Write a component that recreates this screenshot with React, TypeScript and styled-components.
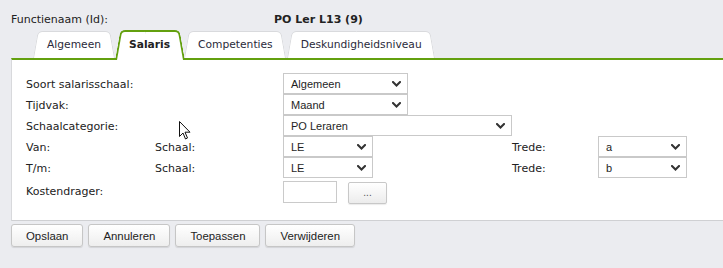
import styled, { createGlobalStyle } from "styled-components";

const GlobalStyle = createGlobalStyle`
  html, body {
    margin: 0;
    background: #ebecf0;
  }
  body {
    font-family: "DejaVu Sans", Verdana, sans-serif;
    font-size: 11px;
    color: #222;
    overflow: hidden;
  }
`;

const GREEN = "#63a00f";

interface TabProps {
  $active?: boolean;
}

interface BoxProps {
  $width: number;
}

const tabs = ["Algemeen", "Salaris", "Competenties", "Deskundigheidsniveau"];

const Chevron = () => (
  <svg width="9" height="6" viewBox="0 0 9 6">
    <polyline
      points="1,1 4.5,4.5 8,1"
      fill="none"
      stroke="#333"
      strokeWidth="2"
      strokeLinecap="square"
    />
  </svg>
);

const Select = ({ value, width }: { value: string; width: number }) => (
  <SelectBox $width={width}>
    <span>{value}</span>
    <Chevron />
  </SelectBox>
);

const Cursor = () => (
  <CursorWrap>
    <svg width="12" height="19" viewBox="0 0 12 19">
      <path
        d="M0.5 0.5 L0.5 15.5 L4 12 L6.5 18 L8.5 17 L6 11.2 L11 11.2 Z"
        fill="#fff"
        stroke="#111"
        strokeWidth="1"
        strokeLinejoin="miter"
      />
    </svg>
  </CursorWrap>
);

const App = () => {
  return (
    <Page>
      <GlobalStyle />
      <Header>
        <span>Functienaam (Id):</span>
        <strong>PO Ler L13 (9)</strong>
      </Header>

      <TabStrip>
        {tabs.map((t) => (
          <Tab key={t} $active={t === "Salaris"}>
            {t}
          </Tab>
        ))}
      </TabStrip>

      <Panel>
        <FormGrid>
          <Label $wide>Soort salarisschaal:</Label>
          <Control $span>
            <Select value="Algemeen" width={125} />
          </Control>

          <Label $wide>Tijdvak:</Label>
          <Control $span>
            <Select value="Maand" width={125} />
          </Control>

          <Label $wide>Schaalcategorie:</Label>
          <Control $span>
            <Select value="PO Leraren" width={229} />
          </Control>

          <Label>Van:</Label>
          <Label>Schaal:</Label>
          <Control>
            <Select value="LE" width={90} />
          </Control>
          <Label>Trede:</Label>
          <Control>
            <Select value="a" width={89} />
          </Control>

          <Label>T/m:</Label>
          <Label>Schaal:</Label>
          <Control>
            <Select value="LE" width={90} />
          </Control>
          <Label>Trede:</Label>
          <Control>
            <Select value="b" width={89} />
          </Control>

          <Label $wide>Kostendrager:</Label>
          <Control $span>
            <TextInput />
            <DotsButton>...</DotsButton>
          </Control>
        </FormGrid>
      </Panel>

      <ButtonBar>
        <Button>Opslaan</Button>
        <Button>Annuleren</Button>
        <Button>Toepassen</Button>
        <Button>Verwijderen</Button>
      </ButtonBar>

      <Cursor />
    </Page>
  );
};

export default App;

const Page = styled.div`
  position: relative;
  width: 723px;
  height: 268px;
  padding: 13px 0 0 11px;
  box-sizing: border-box;
`;

const Header = styled.div`
  display: grid;
  grid-template-columns: 263px auto;
  line-height: 14px;
  height: 14px;

  strong {
    font-weight: bold;
  }
`;

const TabStrip = styled.div`
  position: relative;
  z-index: 2;
  display: flex;
  align-items: flex-end;
  height: 28px;
  margin-top: 3px;
  padding-left: 22px;
`;

const Tab = styled.div<TabProps>`
  position: relative;
  z-index: 0;
  display: flex;
  align-items: center;
  box-sizing: border-box;
  height: ${(p) => (p.$active ? "30px" : "27px")};
  margin-bottom: ${(p) => (p.$active ? "-2px" : "0")};
  padding: ${(p) => (p.$active ? "0 14px 2px" : "0 14px")};
  color: ${(p) => (p.$active ? "#222" : "#2a2a3a")};
  font-size: 10.7px;
  font-weight: ${(p) => (p.$active ? "bold" : "normal")};
  white-space: nowrap;

  &::before,
  &::after {
    content: "";
    position: absolute;
    z-index: -1;
    top: 0;
    bottom: 0;
    background: #fff;
    border-style: solid;
    border-color: ${(p) => (p.$active ? GREEN : "#d9dadd")};
    border-width: ${(p) => (p.$active ? "2px" : "1px")};
    border-bottom: none;
  }

  &::before {
    left: 0;
    right: 50%;
    border-right: none;
    border-top-left-radius: 5px;
    transform-origin: bottom left;
    transform: skewX(-10deg);
  }

  &::after {
    left: 50%;
    right: 0;
    border-left: none;
    border-top-right-radius: 5px;
    transform-origin: bottom right;
    transform: skewX(10deg);
  }
`;

const Panel = styled.div`
  background: #fff;
  border-top: 2px solid ${GREEN};
  border-left: 1px solid #d8d9dc;
  border-bottom: 1px solid #cfd0d3;
  padding: 14px 0 17px 14px;
`;

const FormGrid = styled.div`
  display: grid;
  grid-template-columns: 129px 128px 229px 86px 89px;
  grid-template-rows: repeat(5, 20px) 24px;
  row-gap: 1px;
`;

const Label = styled.div<{ $wide?: boolean }>`
  grid-column: ${(p) => (p.$wide ? "span 2" : "auto")};
  display: flex;
  align-items: center;
  white-space: nowrap;
`;

const Control = styled.div<{ $span?: boolean }>`
  grid-column: ${(p) => (p.$span ? "span 3" : "auto")};
  display: flex;
  align-items: flex-end;
  gap: 11px;
`;

const SelectBox = styled.div<BoxProps>`
  display: flex;
  align-items: center;
  justify-content: space-between;
  box-sizing: border-box;
  width: ${(p) => p.$width}px;
  height: 21px;
  padding: 0 6px 0 7px;
  border: 1px solid #c9c9c9;
  background: #fff;
  font-family: "Liberation Sans", Arial, sans-serif;
  font-size: 11px;
  color: #1e1e1e;
`;

const TextInput = styled.div`
  box-sizing: border-box;
  width: 54px;
  height: 22px;
  border: 1px solid #cacaca;
  background: #fff;
`;

const DotsButton = styled.div`
  display: flex;
  align-items: center;
  justify-content: center;
  box-sizing: border-box;
  width: 39px;
  height: 22px;
  margin-bottom: -1px;
  border: 1px solid #c8c8c8;
  border-radius: 2px;
  background: linear-gradient(#ffffff, #ececec);
  box-shadow: 0 1px 1px rgba(0, 0, 0, 0.08);
  font-family: "Liberation Sans", Arial, sans-serif;
  font-size: 10px;
  color: #555;
  line-height: 1;
`;

const ButtonBar = styled.div`
  display: flex;
  gap: 5px;
  margin-top: 3px;
`;

const Button = styled.div`
  display: flex;
  align-items: center;
  box-sizing: border-box;
  height: 23px;
  padding: 0 14px;
  border: 1px solid #c6c6c6;
  border-radius: 3px;
  background: linear-gradient(#ffffff, #eeeeee);
  box-shadow: 0 1px 1px rgba(0, 0, 0, 0.1);
  font-family: "Liberation Sans", Arial, sans-serif;
  font-size: 11.4px;
  color: #222;
`;

const CursorWrap = styled.div`
  position: absolute;
  left: 179px;
  top: 121px;
  line-height: 0;
  pointer-events: none;
`;
